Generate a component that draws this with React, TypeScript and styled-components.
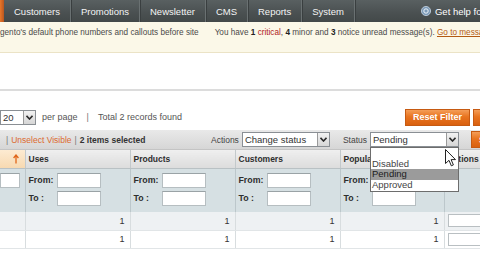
import React from 'react'
import styled, { createGlobalStyle } from 'styled-components'

const GlobalStyle = createGlobalStyle`
  html, body {
    margin: 0;
    padding: 0;
    background: #fff;
    overflow: hidden;
  }
  body {
    font-family: "Liberation Sans", Arial, sans-serif;
    color: #333;
  }
  * { box-sizing: border-box; }
`

const menu = ['Customers', 'Promotions', 'Newsletter', 'CMS', 'Reports', 'System']

const columns = [
  { key: 'check', title: '', width: 25 },
  { key: 'uses', title: 'Uses', width: 105 },
  { key: 'products', title: 'Products', width: 105 },
  { key: 'customers', title: 'Customers', width: 105 },
  { key: 'popularity', title: 'Popularity', width: 104 },
  { key: 'actions', title: 'Actions', width: 60 }
]

const rows = [
  { id: 1, uses: 1, products: 1, customers: 1, popularity: 1 },
  { id: 2, uses: 1, products: 1, customers: 1, popularity: 1 }
]

const Chevron = () => (
  <svg width="7" height="5" viewBox="0 0 7 5">
    <path d="M0.5 0.8 L3.5 4 L6.5 0.8" fill="none" stroke="#2a2a2a" strokeWidth="1.6" />
  </svg>
)

const HelpIcon = () => (
  <svg width="10" height="10" viewBox="0 0 10 10">
    <circle cx="5" cy="5" r="4.6" fill="#7d9bb8" stroke="#c9d6e3" strokeWidth="0.8" />
    <circle cx="5" cy="5" r="2.2" fill="none" stroke="#eef3f8" strokeWidth="1" />
  </svg>
)

const SortUp = () => (
  <svg width="6" height="10" viewBox="0 0 6 10">
    <path d="M3 9.5 L3 1.5 M0.6 4 L3 1 L5.4 4" fill="none" stroke="#e0661a" strokeWidth="1.3" />
  </svg>
)

const Cursor = () => (
  <svg width="11" height="18" viewBox="0 0 11 18">
    <path
      d="M0.5 0.5 L0.5 14.5 L4 11.3 L6.3 16.8 L8.4 15.9 L6.1 10.6 L10.5 10.6 Z"
      fill="#fff"
      stroke="#222"
      strokeWidth="1"
      strokeLinejoin="round"
    />
  </svg>
)

const App = () => {
  return (
    <Page>
      <GlobalStyle />
      <Nav>
        <ActiveEdge />
        {menu.map((item) => (
          <NavItem key={item}>{item}</NavItem>
        ))}
        <Help>
          <HelpIcon />
          <span>Get help for this page</span>
        </Help>
      </Nav>

      <Notice>
        <span>gento's default phone numbers and callouts before site</span>
        <NoticeMessages>
          You have <b>1</b> <Critical>critical</Critical>, <b>4</b> minor and <b>3</b> notice
          unread message(s). <NoticeLink>Go to messages inbox</NoticeLink>
        </NoticeMessages>
      </Notice>

      <PageHead />

      <Pager>
        <PagerLeft>
          <Select $width={36}>
            <SelectValue>20</SelectValue>
            <SelectArrow><Chevron /></SelectArrow>
          </Select>
          <span>per page</span>
          <Pipe>|</Pipe>
          <span>Total 2 records found</span>
        </PagerLeft>
        <Buttons>
          <OrangeButton>Reset Filter</OrangeButton>
          <OrangeButton>Search</OrangeButton>
        </Buttons>
      </Pager>

      <MassBar>
        <MassLeft>
          <Pipe>|</Pipe>
          <MassLink>Unselect Visible</MassLink>
          <Pipe>|</Pipe>
          <b>2 items selected</b>
        </MassLeft>
        <MassRight>
          <MassLabel>Actions</MassLabel>
          <Select $width={88}>
            <SelectValue>Change status</SelectValue>
            <SelectArrow><Chevron /></SelectArrow>
          </Select>
          <MassLabel $gap={13}>Status</MassLabel>
          <StatusWrap>
            <Select $width={89}>
              <SelectValue>Pending</SelectValue>
              <SelectArrow><Chevron /></SelectArrow>
            </Select>
            <Options>
              <Option>&nbsp;</Option>
              <Option>Disabled</Option>
              <Option $active>Pending</Option>
              <Option>Approved</Option>
            </Options>
          </StatusWrap>
          <OrangeButton $gap={12}>Submit</OrangeButton>
        </MassRight>
      </MassBar>

      <Grid>
        <colgroup>
          {columns.map((c) => (
            <col key={c.key} style={{ width: c.width }} />
          ))}
        </colgroup>
        <thead>
          <tr>
            {columns.map((c) =>
              c.key === 'check' ? (
                <HeadCell key={c.key} $sorted>
                  <SortArrow><SortUp /></SortArrow>
                </HeadCell>
              ) : (
                <HeadCell key={c.key}>{c.title}</HeadCell>
              )
            )}
          </tr>
          <tr>
            <FilterCell $first>
              <FilterInput $width={20} />
            </FilterCell>
            {['uses', 'products', 'customers', 'popularity'].map((k) => (
              <FilterCell key={k}>
                <FilterLine>
                  <FilterLabel>From:</FilterLabel>
                  <FilterInput $width={44} />
                </FilterLine>
                <FilterLine>
                  <FilterLabel>To :</FilterLabel>
                  <FilterInput $width={44} />
                </FilterLine>
              </FilterCell>
            ))}
            <FilterCell />
          </tr>
        </thead>
        <tbody>
          {rows.map((r, i) => (
            <Row key={r.id} $odd={i % 2 === 0}>
              <Cell />
              <Cell>{r.uses}</Cell>
              <Cell>{r.products}</Cell>
              <Cell>{r.customers}</Cell>
              <Cell>{r.popularity}</Cell>
              <Cell $left>
                <RowInput />
              </Cell>
            </Row>
          ))}
        </tbody>
      </Grid>

      <Pointer>
        <Cursor />
      </Pointer>
    </Page>
  )
}

export default App

const Page = styled.div`
  position: relative;
  width: 480px;
  height: 270px;
  overflow: hidden;
`
const Nav = styled.div`
  height: 22px;
  display: flex;
  align-items: stretch;
  background: linear-gradient(#596061, #4a5051 60%, #434949);
  white-space: nowrap;
  overflow: hidden;
`
const ActiveEdge = styled.div`
  width: 4px;
  flex-shrink: 0;
  background: linear-gradient(90deg, #e9772a, #b9561f);
`
const NavItem = styled.div`
  display: flex;
  align-items: center;
  padding: 0 10px;
  color: #f4f4f4;
  font-size: 9.5px;
  border-right: 1px solid #6a7172;
  box-shadow: 1px 0 0 #3a3f40;
  flex-shrink: 0;
`
const Help = styled.div`
  display: flex;
  align-items: center;
  gap: 4px;
  margin-left: 66px;
  color: #fff;
  font-size: 9.5px;
  flex-shrink: 0;
`
const Notice = styled.div`
  height: 31px;
  display: flex;
  padding-top: 6px;
  background: #fbf8e8;
  border-bottom: 1px solid #ebe3c6;
  font-size: 8.2px;
  color: #4a4a4a;
  white-space: nowrap;
  overflow: hidden;
`
const NoticeMessages = styled.span`
  margin-left: 16px;
  b { color: #222; }
`
const Critical = styled.span`
  color: #b0201a;
`
const NoticeLink = styled.span`
  color: #b35a13;
  text-decoration: underline;
`
const PageHead = styled.div`
  height: 38px;
  border-bottom: 2px solid #dcdcdc;
  margin-bottom: 17px;
`
const Pager = styled.div`
  height: 18px;
  display: grid;
  grid-template-columns: 1fr 75px;
  align-items: center;
  font-size: 9px;
  color: #555;
`
const PagerLeft = styled.div`
  display: flex;
  align-items: center;
  gap: 6px;
`
const Pipe = styled.span`
  color: #777;
  margin: 0 3px;
`
const Buttons = styled.div`
  display: flex;
  gap: 3px;
  overflow: hidden;
  white-space: nowrap;
`
const OrangeButton = styled.div<{ $gap?: number }>`
  height: 17px;
  padding: 0 7px;
  margin-left: ${(p) => p.$gap ?? 0}px;
  display: flex;
  align-items: center;
  flex-shrink: 0;
  background: linear-gradient(#f49d58, #e8741f 45%, #d9600f);
  border: 1px solid #c65a12;
  color: #fff;
  font-size: 9px;
  font-weight: bold;
`
const Select = styled.div<{ $width: number }>`
  width: ${(p) => p.$width}px;
  height: 15px;
  display: flex;
  align-items: stretch;
  background: #fff;
  border: 1px solid #8a8f94;
  flex-shrink: 0;
`
const SelectValue = styled.div`
  flex: 1;
  display: flex;
  align-items: center;
  padding-left: 2px;
  font-size: 9.5px;
  color: #333;
  white-space: nowrap;
  overflow: hidden;
`
const SelectArrow = styled.div`
  width: 12px;
  display: flex;
  align-items: center;
  justify-content: center;
  background: linear-gradient(#f2f2f2, #d6d6d6);
  border-left: 1px solid #9a9a9a;
`
const MassBar = styled.div`
  margin-top: 4px;
  height: 20px;
  display: grid;
  grid-template-columns: 211px 1fr;
  align-items: center;
  background: linear-gradient(#e9e9e9, #d6d6d6);
  border-bottom: 1px solid #c4c4c4;
  font-size: 8.5px;
  color: #444;
`
const MassLeft = styled.div`
  display: flex;
  align-items: center;
  padding-left: 3px;
  white-space: nowrap;
  b { color: #333; }
`
const MassLink = styled.span`
  color: #dc6a30;
`
const MassRight = styled.div`
  display: flex;
  align-items: center;
  white-space: nowrap;
`
const MassLabel = styled.span<{ $gap?: number }>`
  margin-left: ${(p) => p.$gap ?? 0}px;
  margin-right: 3px;
  color: #444;
`
const StatusWrap = styled.div`
  position: relative;
`
const Options = styled.div`
  position: absolute;
  top: 100%;
  left: 0;
  width: 89px;
  z-index: 5;
  background: #fff;
  border: 1px solid #6d6d6d;
  padding-bottom: 1px;
`
const Option = styled.div<{ $active?: boolean }>`
  height: 10.5px;
  line-height: 10.5px;
  padding-left: 1px;
  font-size: 9.5px;
  color: ${(p) => (p.$active ? '#1c1c1c' : '#444')};
  background: ${(p) => (p.$active ? '#9b9b9b' : '#fff')};
`
const Grid = styled.table`
  width: 504px;
  table-layout: fixed;
  border-collapse: collapse;
  border-bottom: 1px solid #d3d8da;
`
const HeadCell = styled.th<{ $sorted?: boolean }>`
  height: 18px;
  padding: 0 3px;
  text-align: left;
  font-size: 8.5px;
  font-weight: bold;
  color: #2e2e2e;
  background: ${(p) =>
    p.$sorted ? 'linear-gradient(#fdebd2, #f7d9b1)' : 'linear-gradient(#efefef, #dcdcdc)'};
  border-right: 1px solid #c3c9cb;
  border-bottom: 1px solid #b9c1c4;
  white-space: nowrap;
  overflow: hidden;
`
const SortArrow = styled.span`
  display: flex;
  justify-content: flex-end;
  padding-right: 3px;
`
const FilterCell = styled.td<{ $first?: boolean }>`
  height: 44px;
  vertical-align: top;
  padding: 4px ${(p) => (p.$first ? 0 : 3)}px 0;
  background: #d6e0e3;
  border-right: 1px solid #bcc7cb;
`
const FilterLine = styled.div`
  display: flex;
  align-items: center;
  margin-bottom: 3px;
`
const FilterLabel = styled.span`
  width: 28px;
  font-size: 8.8px;
  font-weight: bold;
  color: #2e2e2e;
`
const FilterInput = styled.div<{ $width: number }>`
  width: ${(p) => p.$width}px;
  height: 15px;
  background: #fff;
  border: 1px solid #b6bec1;
  border-top-color: #9aa3a6;
`
const Row = styled.tr<{ $odd: boolean }>`
  background: ${(p) => (p.$odd ? '#eef1f3' : '#fff')};
`
const Cell = styled.td<{ $left?: boolean }>`
  height: 18px;
  padding: 0 ${(p) => (p.$left ? 0 : 5)}px 0 ${(p) => (p.$left ? 3 : 0)}px;
  text-align: right;
  font-size: 9px;
  color: #333;
  border-right: 1px solid #d8dddf;
  border-bottom: 1px solid #e1e5e7;
`
const RowInput = styled.div`
  width: 44px;
  height: 13px;
  background: #fff;
  border: 1px solid #b9bfc2;
`
const Pointer = styled.div`
  position: absolute;
  left: 445px;
  top: 149px;
  z-index: 6;
  line-height: 0;
`
